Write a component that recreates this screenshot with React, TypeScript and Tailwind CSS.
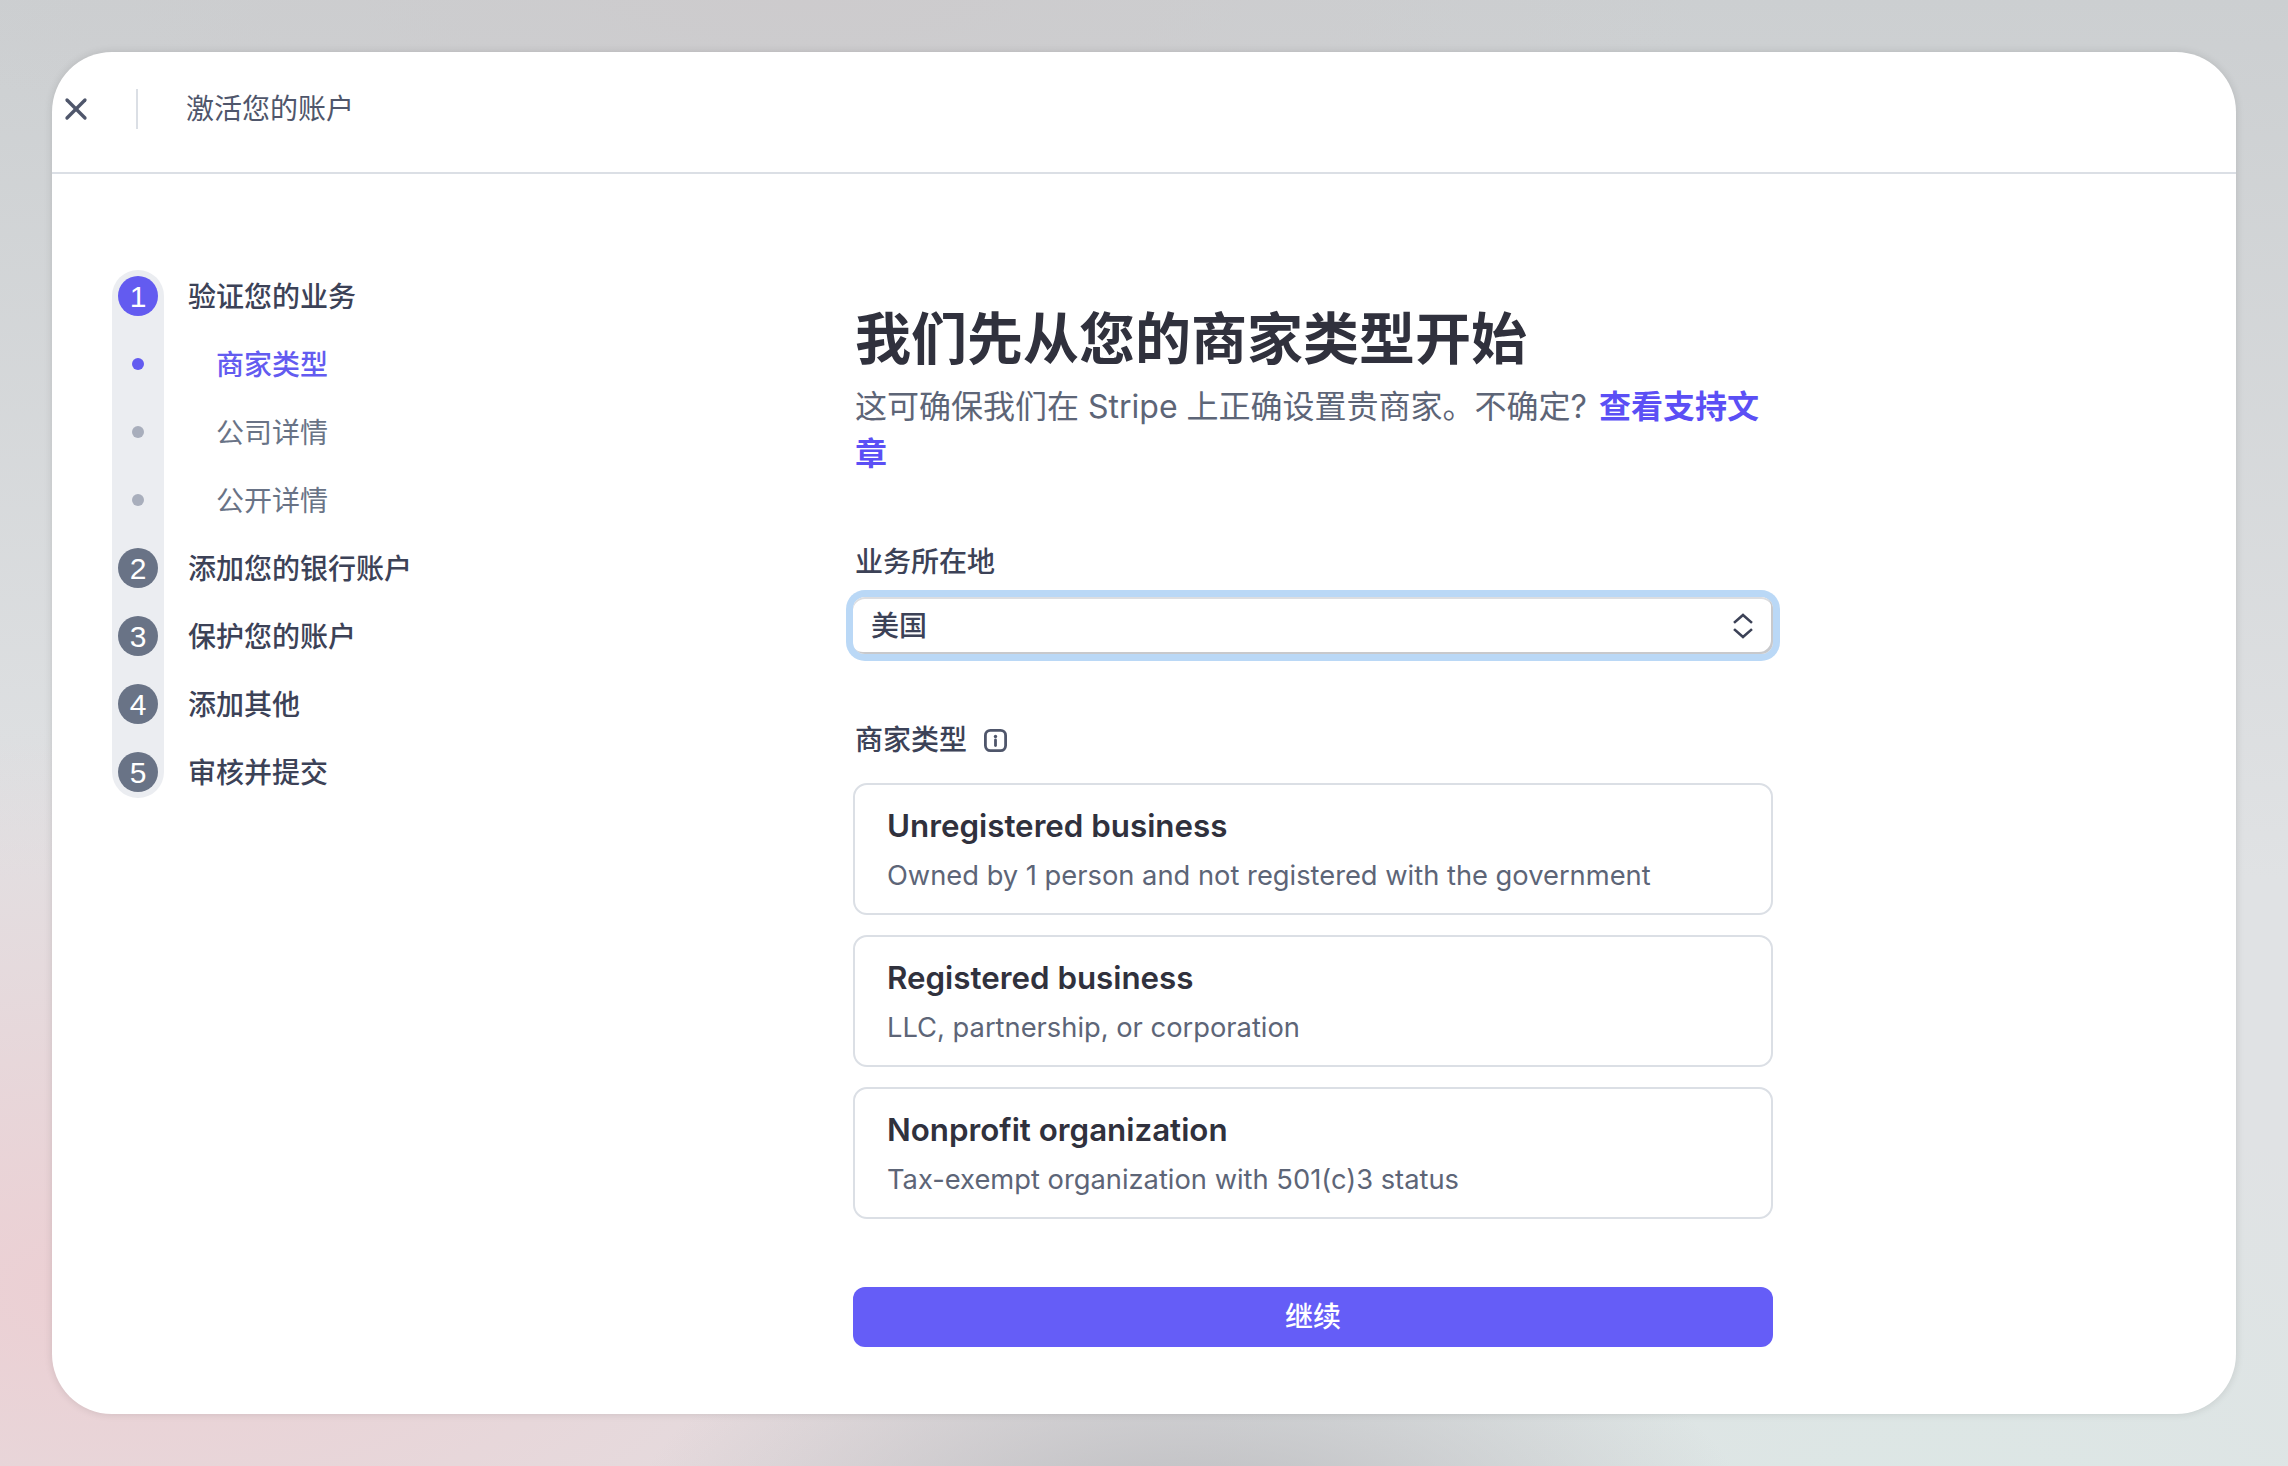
import React from "react";
import { X } from "lucide-react";

const sans = "font-['Inter','Noto_Sans_CJK_SC',sans-serif]";

const steps = [
  { label: "验证您的业务", kind: "active", num: "1" },
  { label: "商家类型", kind: "subActive" },
  { label: "公司详情", kind: "sub" },
  { label: "公开详情", kind: "sub" },
  { label: "添加您的银行账户", kind: "todo", num: "2" },
  { label: "保护您的账户", kind: "todo", num: "3" },
  { label: "添加其他", kind: "todo", num: "4" },
  { label: "审核并提交", kind: "todo", num: "5" },
];

const types = [
  { title: "Unregistered business", desc: "Owned by 1 person and not registered with the government" },
  { title: "Registered business", desc: "LLC, partnership, or corporation" },
  { title: "Nonprofit organization", desc: "Tax-exempt organization with 501(c)3 status" },
];

const StepMarker = ({ kind, num }: { kind: string; num?: string }) => {
  if (num) {
    return (
      <div
        className={`w-10 h-10 rounded-full flex items-center justify-center text-white text-[30px] font-['Liberation_Sans',sans-serif] ${
          kind === "active" ? "bg-[#635bf0]" : "bg-[#697386]"
        }`}
      >
        {num}
      </div>
    );
  }
  return (
    <div className="w-10 h-10 flex items-center justify-center">
      <div className={`w-3 h-3 rounded-full ${kind === "subActive" ? "bg-[#635bf0]" : "bg-[#a8aebc]"}`} />
    </div>
  );
};

const Sidebar = () => {
  return (
    <div className="w-[801px] shrink-0 pl-[60px] pt-[96px] flex items-start">
      <div className="w-[52px] rounded-full bg-[#ebedf1] py-[6px] flex flex-col items-center gap-[28px]">
        {steps.map((step) => (
          <StepMarker key={step.label} kind={step.kind} num={step.num} />
        ))}
      </div>
      <div className="ml-6 pt-[7px] flex flex-col gap-[28px]">
        {steps.map((step) => (
          <div
            key={step.label}
            className={`h-10 flex items-center text-[28px] leading-10 whitespace-nowrap ${
              step.kind === "subActive"
                ? "pl-7 text-[#635bf0] font-medium"
                : step.kind === "sub"
                ? "pl-7 text-[#697386]"
                : "text-[#3c4257] font-medium"
            }`}
          >
            {step.label}
          </div>
        ))}
      </div>
    </div>
  );
};

const TypeCard = ({ title, desc }: { title: string; desc: string }) => {
  return (
    <div className="h-[132px] rounded-[14px] border-2 border-[#dbdfe5] bg-white pl-[32px] pt-[19px]">
      <div className="text-[31.3px] leading-[44px] font-semibold text-[#30313d]">{title}</div>
      <div className="mt-[8px] text-[27.3px] leading-[40px] text-[#5d6577]">{desc}</div>
    </div>
  );
};

const MainForm = () => {
  return (
    <div className="w-[920px] pt-[133px]">
      <h1 className="pl-[2px] text-[56px] leading-[64px] font-bold text-[#30313d]">我们先从您的商家类型开始</h1>
      <p className="pl-[2px] mt-3 text-[32px] leading-[47px] text-[#5d6577]">
        这可确保我们在 Stripe 上正确设置贵商家。不确定?
        <span className="ml-3 font-bold text-[#5b4ff5]">查看支持文章</span>
      </p>

      <div className="pl-[2px] mt-[67px] text-[28px] leading-9 font-medium text-[#3c4257]">业务所在地</div>
      <div className="mt-[17px] h-[57px] rounded-[12px] bg-white flex items-center justify-between pl-[18px] pr-[20px] text-[28px] font-medium text-[#3c4257] shadow-[inset_-2px_-2px_0_#c8c9cc,inset_0_2px_0_#dcdde0,0_0_0_7px_#bad8f6]">
        <span>美国</span>
        <svg width="20" height="26" viewBox="0 0 20 26" fill="none" stroke="#3c4257" strokeWidth="2.6" strokeLinecap="square">
          <path d="M2 9 L10 2 L18 9" />
          <path d="M2 17 L10 24 L18 17" />
        </svg>
      </div>

      <div className="pl-[2px] mt-[68px] h-9 flex items-center text-[28px] font-medium text-[#3c4257]">
        <span>商家类型</span>
        <svg className="ml-[17px]" width="23" height="23" viewBox="0 0 23 23" fill="none">
          <rect x="1.4" y="1.4" width="20.2" height="20.2" rx="5" stroke="#4f566b" strokeWidth="2.8" />
          <circle cx="11.5" cy="7.5" r="1.7" fill="#4f566b" />
          <path d="M11.5 11 V16.5" stroke="#4f566b" strokeWidth="2.8" strokeLinecap="round" />
        </svg>
      </div>

      <div className="mt-[25px] flex flex-col gap-[20px]">
        {types.map((type) => (
          <TypeCard key={type.title} title={type.title} desc={type.desc} />
        ))}
      </div>

      <button className="mt-[68px] w-full h-[60px] rounded-[12px] bg-[#655df7] text-white text-[28px] font-medium flex items-center justify-center">
        继续
      </button>
    </div>
  );
};

const App = () => {
  return (
    <div
      className={`${sans} w-[2288px] h-[1466px] p-[52px] overflow-hidden bg-[radial-gradient(ellipse_560px_240px_at_52%_104%,#bcbcbf_0%,rgba(188,188,191,0)_100%),radial-gradient(ellipse_1200px_560px_at_5%_88%,#eccfd3_0%,rgba(236,207,211,0)_100%),radial-gradient(ellipse_760px_420px_at_85%_104%,#dce7e5_0%,rgba(220,231,229,0)_100%),radial-gradient(ellipse_900px_200px_at_35%_0%,#cdcbcd_0%,rgba(205,203,205,0)_100%),linear-gradient(180deg,#cccfd1_0%,#e0e2e4_60%,#e0e2e4_100%)]`}
    >
      <div className="h-[1362px] rounded-[60px] bg-white flex flex-col overflow-hidden shadow-[0_0_8px_rgba(0,0,0,0.12)]">
        <div className="h-[122px] shrink-0 border-b-2 border-[#dbdfe5] flex items-start pt-[37px] pl-[11px] text-[#4f566b]">
          <div className="w-[26px] h-[40px] flex items-center justify-center">
            <X className="shrink-0" size={36} strokeWidth={2.2} color="#4f566b" />
          </div>
          <div className="ml-[47px] w-[2px] h-[40px] bg-[#dbdfe5]" />
          <div className="ml-[48px] h-[40px] leading-[40px] text-[28px] text-[#4f566b]">激活您的账户</div>
        </div>
        <div className="flex flex-1">
          <Sidebar />
          <MainForm />
        </div>
      </div>
    </div>
  );
};

export default App;
